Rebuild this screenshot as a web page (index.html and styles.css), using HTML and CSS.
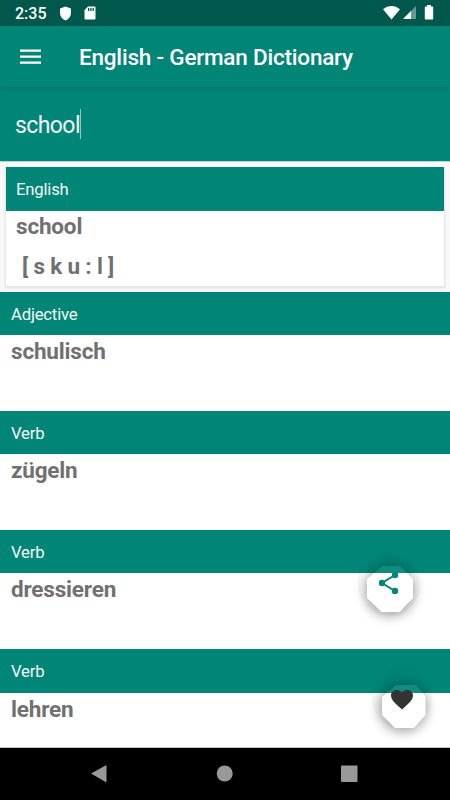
FILE: index.html
```html
<!DOCTYPE html>
<html lang="en">
<head>
<meta charset="utf-8">
<title>English - German Dictionary</title>
<link rel="stylesheet" href="styles.css">
</head>
<body>
<div class="screen">
  <header class="status">
    <span class="clock">2:35</span>
    <svg class="shield" width="13" height="15" viewBox="0 0 13 15"><path d="M6.500 .5 12 2.600V7c0 3.500-2.200 6-5.500 7.500C3.200 13 1 10.500 1 7V2.600Z"/></svg>
    <svg class="sd" width="12" height="14" viewBox="0 0 12 14"><path fill-rule="evenodd" d="M4 .5h6.500q1 0 1 1v11q0 1-1 1h-9q-1 0-1-1V4ZM4 2v3h1.300V2Zm2.300 0v3h1.300V2Zm2.300 0v3h1.300V2Z"/></svg>
    <svg class="signals" width="52" height="16" viewBox="0 0 52 16"><path d="M0 4.300C5-.2 12-.2 17 4.300L8.500 14.500Z"/><path class="dim" d="M33 1v13H20Z"/><path d="M28 6v8h-8Z"/><path d="M42.500 1.500h1.500V0h4v1.500h1.500q.7 0 .7.700v11.600q0 .7-.7.700h-7q-.7 0-.7-.7V2.200q0-.7.7-.7Z"/></svg>
  </header>
  <div class="toolbar">
    <svg class="menu" width="21" height="16" viewBox="0 0 21 16"><path d="M0 .5h21v2.300H0Zm0 6h21v2.300H0Zm0 6h21v2.300H0Z"/></svg>
    <h1>English - German Dictionary</h1>
  </div>
  <div class="search"><span class="query">school</span><i class="caret"></i></div>
  <main>
    <div class="card-wrap">
      <section class="card">
        <h2>English</h2>
        <p>school</p>
        <p class="phonetic">[ s k u : l ]</p>
      </section>
    </div>
    <section class="entry"><h2>Adjective</h2><p>schulisch</p></section>
    <section class="entry"><h2>Verb</h2><p>zügeln</p></section>
    <section class="entry"><h2>Verb</h2><p>dressieren</p></section>
    <section class="entry"><h2>Verb</h2><p>lehren</p></section>
  </main>
  <nav>
    <svg width="450" height="52" viewBox="0 0 450 52"><path d="M91 25.500 106.500 17v17.500Z"/><circle cx="224.700" cy="25.500" r="8"/><rect x="341" y="17.500" width="16.500" height="16.500" rx="1"/></svg>
  </nav>
  <svg class="fab share" width="90" height="90" viewBox="0 0 90 90">
    <defs>
      <filter id="soft" x="-50%" y="-50%" width="200%" height="200%"><feGaussianBlur stdDeviation="6"/></filter>
      <mask id="share-hole" maskUnits="userSpaceOnUse" x="0" y="0" width="90" height="90"><path fill="#fff" d="M0 0h90v90H0Z"/><path fill="#000" d="M37 21h18l13 13v19L54.500 67h-18L22 53V34Z"/></mask>
    </defs>
    <g mask="url(#share-hole)">
      <circle class="shade" cx="45" cy="46" r="25" filter="url(#soft)"/>
      <path class="rim" d="M34 9h21l18 18 2 20-7 12-13 11H34L20 59l-6-12V28Z"/>
    </g>
    <path class="glow" d="M37 21h18l13 13v19L54.500 67h-18L22 53V34Z"/>
    <path class="link" d="M50 30 37 38l13 8"/>
    <g class="dots"><circle cx="50" cy="30" r="3.200"/><circle cx="37" cy="38" r="3.200"/><circle cx="50" cy="46" r="3.200"/></g>
  </svg>
  <svg class="fab like" width="90" height="90" viewBox="0 0 90 90">
    <mask id="like-hole" maskUnits="userSpaceOnUse" x="0" y="0" width="90" height="90"><path fill="#fff" d="M0 0h90v90H0Z"/><path fill="#000" d="M36 20h20l9.500 11v19L54 63H35L22 50V32Z"/></mask>
    <g mask="url(#like-hole)">
      <circle class="shade" cx="43" cy="43" r="24" filter="url(#soft)"/>
      <circle class="rim" cx="42" cy="33" r="29.500"/>
    </g>
    <path class="glow" d="M36 20h20l9.500 11v19L54 63H35L22 50V32Z"/>
    <path class="heart" d="m42 44.500-1.600-1.400C34.800 38 31 34.700 31 30.600 31 27.300 33.500 25 36.800 25c2 0 4 1 5.200 2.500C43.200 26 45.200 25 47.200 25c3.300 0 5.800 2.300 5.800 5.600 0 4.100-3.800 7.400-9.400 12.500Z"/>
  </svg>
</div>
</body>
</html>
```

FILE: styles.css
```css
* { box-sizing: border-box; }
body { margin: 0; font-family: Roboto, sans-serif; }
.screen { position: relative; width: 450px; height: 800px; overflow: hidden; display: flex; flex-direction: column; background: #fff; }
.status { height: 26px; flex: none; background: #00574b; display: flex; align-items: center; padding: 0 15px 0 15px; fill: #fff; color: #fff; }
.clock { width: 44px; font-size: 16px; font-weight: 500; line-height: 26px; padding-top: 2px; }
.sd { margin-left: 11.500px; }
.signals { margin-left: auto; }
.dim { opacity: .4; }
.toolbar { height: 61px; flex: none; background: #008577; display: flex; align-items: center; padding: 2px 20px 0; box-shadow: 0 1px 3px rgba(0,0,0,.16); z-index: 1; }
.menu { fill: #fff; margin-top: -1px; }
h1 { margin: -1px 0 0 38px; color: #fff; font-size: 22.500px; font-weight: 500; letter-spacing: -.21px; white-space: nowrap; }
.search { height: 74px; flex: none; background: #008577; display: flex; align-items: center; padding: 1px 15px 0; color: #f0f5f4; font-size: 23px; }
.query { letter-spacing: -.58px; margin-top: 2px; }
.caret { width: 1px; height: 30px; background: #8cc9c2; margin-top: -1px; }
main { flex: 1; min-height: 0; overflow: hidden; border-bottom: 1px solid #c4c4c4; }
.card-wrap { height: 130.500px; padding: 5px 5px 5px; background: #f9f9f9; border-top: 1px solid #b5d6d2; }
.card { height: 120px; background: #fff; border: 1px solid #e6e6e6; border-top: 0; box-shadow: 0 1px 2px rgba(0,0,0,.1); }
h2 { margin: 0; height: 43.500px; background: #008577; color: #f5f8f7; font-size: 16.700px; font-weight: 400; letter-spacing: -.2px; line-height: 45px; padding-left: 11px; }
.card h2, .card p { padding-left: 10px; }
p { margin: 0; padding-left: 11px; color: #707070; font-size: 22.500px; font-weight: 700; letter-spacing: -.18px; line-height: 32px; }
.card p { line-height: 31px; }
.card .phonetic { padding: 9px 0 0 16px; }
.entry { height: 119.200px; }
nav { height: 52px; flex: none; background: #000; fill: #999; margin-top: auto; }
nav svg { display: block; }
.fab { position: absolute; }
.share { left: 345px; top: 545px; }
.like { left: 360px; top: 665px; }
.shade { fill: #000; opacity: .36; }
.rim { fill: #000; fill-opacity: .02; stroke: #000; stroke-opacity: .03; }
.glow { fill: #fff; opacity: .06; }
.link { fill: none; stroke: #008577; stroke-width: 2; }
.dots { fill: #008577; }
.heart { fill: #333; }
```
